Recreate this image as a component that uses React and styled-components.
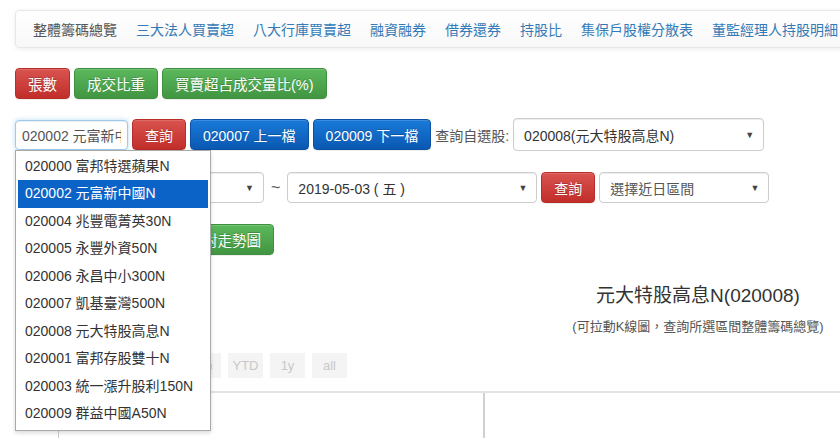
import React from 'react'
import styled, { createGlobalStyle, css } from 'styled-components'

const GlobalStyle = createGlobalStyle`
  html, body { margin: 0; padding: 0; background: #fff; overflow: hidden; }
  body {
    font-family: "Liberation Sans", Arial, "Noto Sans CJK TC", sans-serif;
    font-size: 14px;
    color: #333;
  }
  * { box-sizing: border-box; }
`

const Page = styled.div`
  width: 1396px;
  padding: 10px 15px 0;
`

const NavBar = styled.div`
  display: flex;
  align-items: center;
  gap: 19px;
  height: 38px;
  padding-left: 17px;
  background: linear-gradient(#fff, #f8f8f8);
  border: 1px solid #e7e7e7;
  border-radius: 4px;
  box-shadow: inset 0 1px 0 rgba(255, 255, 255, .15), 0 1px 5px rgba(0, 0, 0, .075);
`

const NavLink = styled.a`
  color: ${p => (p.$active ? '#555' : '#337ab7')};
  text-decoration: none;
  white-space: nowrap;
`

const Row = styled.div`
  display: flex;
  align-items: center;
  gap: 4px;
  margin-top: ${p => p.$top}px;
`

const tones = {
  danger: css`
    background: linear-gradient(#d9534f, #c12e2a);
    border-color: #b92c28;
  `,
  success: css`
    background: linear-gradient(#5cb85c, #419641);
    border-color: #3e8f3e;
  `,
  primary: css`
    background: linear-gradient(#1a7ad9, #0a58b2);
    border-color: #0a51a3;
  `,
}

const Btn = styled.button`
  height: 31px;
  padding: 0 12px;
  border: 1px solid;
  border-radius: 4px;
  font-family: inherit;
  font-size: ${p => p.$size || 14}px;
  color: #fff;
  white-space: nowrap;
  text-shadow: 0 -1px 0 rgba(0, 0, 0, .2);
  box-shadow: inset 0 1px 0 rgba(255, 255, 255, .15), 0 1px 1px rgba(0, 0, 0, .075);
  ${p => tones[p.$tone]}
`

const SearchWrap = styled.div`
  position: relative;
`

const SearchInput = styled.input`
  display: block;
  width: 113px;
  height: 30px;
  padding: 0 6px;
  border: 1px solid #9ecaed;
  border-radius: 4px;
  font-family: inherit;
  font-size: 14px;
  color: #555;
  outline: none;
  box-shadow: inset 0 1px 1px rgba(0, 0, 0, .075), 0 0 5px rgba(102, 175, 233, .45);
`

const Options = styled.ul`
  position: absolute;
  top: 100%;
  left: 0;
  z-index: 10;
  width: 196px;
  margin: 0;
  padding: 2px;
  list-style: none;
  background: #fff;
  border: 1px solid #a9a9a9;
  box-shadow: 0 2px 4px rgba(0, 0, 0, .15);
`

const Option = styled.li`
  height: 27.5px;
  line-height: 27.5px;
  padding-left: 7px;
  white-space: nowrap;
  color: ${p => (p.$selected ? '#fff' : '#333')};
  background: ${p => (p.$selected ? '#0c63c7' : 'transparent')};
`

const Label = styled.span`
  color: #555;
  white-space: nowrap;
`

const Select = styled.div`
  display: flex;
  align-items: center;
  justify-content: space-between;
  width: ${p => p.$w}px;
  height: ${p => p.$h || 31}px;
  padding: 0 9px 0 10px;
  background: #fff;
  border: 1px solid #ccc;
  border-radius: 4px;
  box-shadow: inset 0 1px 1px rgba(0, 0, 0, .075);
  color: ${p => (p.$muted ? '#555' : '#333')};
  white-space: nowrap;

  &::after {
    content: '▼';
    font-size: 9px;
    color: #444;
  }
`

const Tilde = styled.span`
  margin: 0 3px;
  color: #555;
  font-size: 16px;
`

const ChartBox = styled.div`
  margin-top: 29px;
`

const ChartTitle = styled.div`
  text-align: center;
  font-size: 19px;
  line-height: 24px;
  color: #333;
`

const ChartSub = styled.div`
  margin-top: 11px;
  text-align: center;
  font-size: 13px;
  line-height: 16px;
  color: #555;
`

const RangeRow = styled.div`
  display: flex;
  align-items: center;
  gap: 7px;
  margin-top: 18px;
  padding-left: 45px;
`

const RangeLabel = styled.span`
  width: 35px;
  font-size: 13px;
  color: #333;
`

const RangeBtn = styled.span`
  display: flex;
  align-items: center;
  justify-content: center;
  width: 35px;
  height: 25px;
  background: #f4f4f4;
  color: #c8c8c8;
  font-size: 13px;
`

const Plot = styled.svg`
  display: block;
  margin-top: 13px;
`

const navItems = ['整體籌碼總覽', '三大法人買賣超', '八大行庫買賣超', '融資融券', '借券還券', '持股比', '集保戶股權分散表', '董監經理人持股明細']

const funds = [
  '020000 富邦特選蘋果N',
  '020002 元富新中國N',
  '020004 兆豐電菁英30N',
  '020005 永豐外資50N',
  '020006 永昌中小300N',
  '020007 凱基臺灣500N',
  '020008 元大特股高息N',
  '020001 富邦存股雙十N',
  '020003 統一漲升股利150N',
  '020009 群益中國A50N',
]

const ranges = ['1m', '3m', '6m', 'YTD', '1y', 'all']

const App = () => {
  return (
    <Page>
      <GlobalStyle />
      <NavBar>
        {navItems.map((t, i) => (
          <NavLink key={t} $active={i === 0}>{t}</NavLink>
        ))}
      </NavBar>

      <Row $top={20}>
        <Btn $tone="danger" $size={14.5}>張數</Btn>
        <Btn $tone="success" $size={14.5}>成交比重</Btn>
        <Btn $tone="success" $size={14.5}>買賣超占成交量比(%)</Btn>
      </Row>

      <Row $top={19}>
        <SearchWrap>
          <SearchInput defaultValue="020002 元富新中國N" />
          <Options>
            {funds.map(f => (
              <Option key={f} $selected={f.startsWith('020002')}>{f}</Option>
            ))}
          </Options>
        </SearchWrap>
        <Btn $tone="danger">查詢</Btn>
        <Btn $tone="primary">020007 上一檔</Btn>
        <Btn $tone="primary">020009 下一檔</Btn>
        <Label>查詢自選股:</Label>
        <Select $w={251} $h={33}>020008(元大特股高息N)</Select>
      </Row>

      <Row $top={21}>
        <Select $w={249}>2019-02-01 ( 五 )</Select>
        <Tilde>~</Tilde>
        <Select $w={250}>2019-05-03 ( 五 )</Select>
        <Btn $tone="danger">查詢</Btn>
        <Select $w={170} $muted>選擇近日區間</Select>
      </Row>

      <Row $top={21}>
        <Btn $tone="success" $size={14.5}>籌碼分布</Btn>
        <Btn $tone="success" $size={14.5}>股價與籌碼相對走勢圖</Btn>
      </Row>

      <ChartBox>
        <ChartTitle>元大特股高息N(020008)</ChartTitle>
        <ChartSub>(可拉動K線圖，查詢所選區間整體籌碼總覽)</ChartSub>
        <RangeRow>
          <RangeLabel>Zoom</RangeLabel>
          {ranges.map(r => <RangeBtn key={r}>{r}</RangeBtn>)}
        </RangeRow>
        <Plot width="1366" height="50">
          <line x1="0" y1="1" x2="1366" y2="1" stroke="#e3e3e3" strokeWidth="2" />
          <line x1="43.5" y1="2" x2="43.5" y2="50" stroke="#ccc" strokeWidth="1" />
          <line x1="469" y1="2" x2="469" y2="50" stroke="#d0d0d0" strokeWidth="2" />
        </Plot>
      </ChartBox>
    </Page>
  )
}

export default App
